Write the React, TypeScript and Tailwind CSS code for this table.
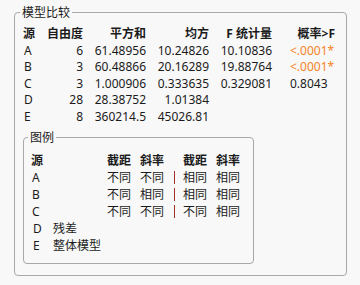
import React from "react";

type Row = {
  src: string;
  df: string;
  ss: string;
  ms: string;
  f: string;
  p: string;
  sig: boolean;
};

const rows: Row[] = [
  { src: "A", df: "6", ss: "61.48956", ms: "10.24826", f: "10.10836", p: "<.0001*", sig: true },
  { src: "B", df: "3", ss: "60.48866", ms: "20.16289", f: "19.88764", p: "<.0001*", sig: true },
  { src: "C", df: "3", ss: "1.000906", ms: "0.333635", f: "0.329081", p: "0.8043", sig: false },
  { src: "D", df: "28", ss: "28.38752", ms: "1.01384", f: "", p: "", sig: false },
  { src: "E", df: "8", ss: "360214.5", ms: "45026.81", f: "", p: "", sig: false },
];

const legend = [
  { src: "A", v: ["不同", "不同", "相同", "相同"] },
  { src: "B", v: ["不同", "相同", "相同", "相同"] },
  { src: "C", v: ["不同", "不同", "不同", "相同"] },
];

const font = { fontFamily: '"Noto Sans", "Noto Sans CJK SC", sans-serif' };

export default function App() {
  return (
    <div className="w-[360px] h-[285px] bg-[#f8f8f8] text-[12px] text-[#1b1b1b] pl-[14px] pt-[4px]" style={font}>
      <fieldset className="w-[333px] h-[272px] border border-[#a8a8a8] rounded-[4px] pl-[8px]">
        <legend className="-ml-[3px] px-[2px] leading-[17px]">模型比较</legend>

        {/* comparison table */}
        <div className="grid grid-cols-[28px_32px_63px_63px_63px_63px] leading-[16.5px] mt-[5px] whitespace-nowrap">
          <div className="font-bold">源</div>
          <div className="font-bold flex justify-end">自由度</div>
          <div className="font-bold text-right">平方和</div>
          <div className="font-bold text-right">均方</div>
          <div className="font-bold text-right">F 统计量</div>
          <div className="font-bold text-right">概率&gt;F</div>
          {rows.map((r) => (
            <React.Fragment key={r.src}>
              <div className="pl-[1px]">{r.src}</div>
              <div className="text-right">{r.df}</div>
              <div className="text-right">{r.ss}</div>
              <div className="text-right">{r.ms}</div>
              <div className="text-right">{r.f}</div>
              <div className={`pl-[18px] ${r.sig ? "text-[#f5821f]" : ""}`}>{r.p}</div>
            </React.Fragment>
          ))}
        </div>

        {/* legend box */}
        <fieldset className="mt-[4px] w-[231px] h-[135px] border border-[#a8a8a8] rounded-[4px] pl-[7px]">
          <legend className="-ml-[3px] px-[2px] leading-[17px]">图例</legend>
          <div className="grid grid-cols-[76px_33px_33px_10px_33px_33px] leading-[17px] mt-[6px]">
            <div className="font-bold">源</div>
            <div className="font-bold">截距</div>
            <div className="font-bold">斜率</div>
            <div></div>
            <div className="font-bold">截距</div>
            <div className="font-bold">斜率</div>
            {legend.map((l) => (
              <React.Fragment key={l.src}>
                <div className="pl-[1px]">{l.src}</div>
                <div>{l.v[0]}</div>
                <div>{l.v[1]}</div>
                <div className="flex items-center pl-[1px]">
                  <span className="w-[1px] h-[13px] bg-[#a3312b]" />
                </div>
                <div>{l.v[2]}</div>
                <div>{l.v[3]}</div>
              </React.Fragment>
            ))}
          </div>
          <div className="flex leading-[17px]">
            <div className="w-[22px] pl-[2px]">D</div>
            <div>残差</div>
          </div>
          <div className="flex leading-[17px]">
            <div className="w-[22px] pl-[2px]">E</div>
            <div>整体模型</div>
          </div>
        </fieldset>
      </fieldset>
    </div>
  );
}
